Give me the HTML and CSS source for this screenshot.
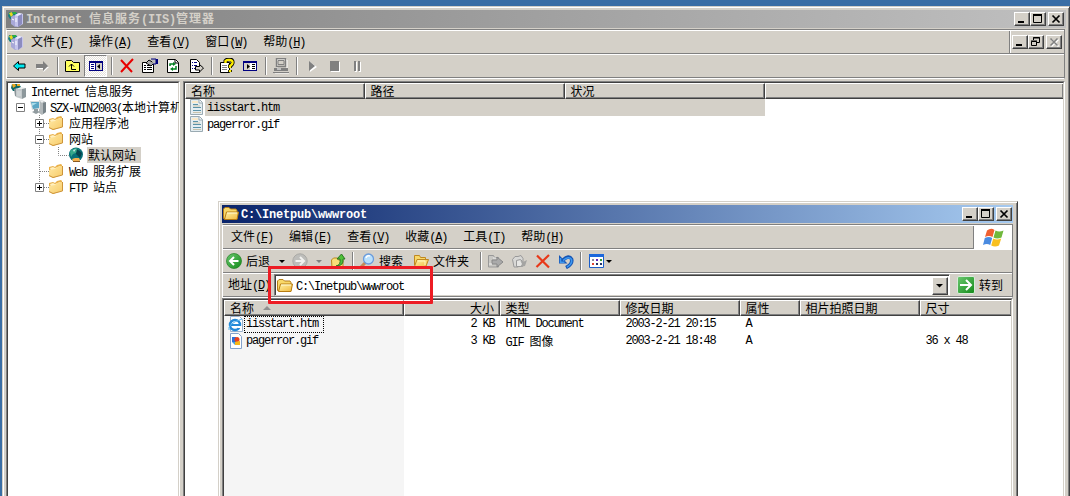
FILE: index.html
```html
<!DOCTYPE html>
<html lang="zh-CN">
<head>
<meta charset="utf-8">
<title>Internet 信息服务(IIS)管理器</title>
<link rel="stylesheet" href="styles.css">
</head>
<body>
<svg class="defs" width="0" height="0">
  <defs>
    <linearGradient id="fold" x1="0" y1="0" x2="1" y2="1"><stop offset="0" stop-color="#fff3a8"/><stop offset="1" stop-color="#f0b83c"/></linearGradient>
    <linearGradient id="tfold" x1="0" y1="0" x2="1" y2="1"><stop offset="0" stop-color="#ffe9a6"/><stop offset="1" stop-color="#f7cb68"/></linearGradient>
    <linearGradient id="grn" x1="0" y1="0" x2="1" y2="1"><stop offset="0" stop-color="#6cc870"/><stop offset="1" stop-color="#128a18"/></linearGradient>
    <symbol id="server" viewBox="0 0 16 16">
      <path d="M1 1h7l2 3-2 4H2L0 5z" fill="#168080"/><path d="M1 2l3-1 1 3-2 2z" fill="#e8d820"/><path d="M5 1h3v2H5z" fill="#28b040"/>
      <path d="M3 6l3-2 4 2v9l-3 1-4-3z" fill="#a8a8d8"/><path d="M7 4l4-2 4 1v10l-5 3-3-1z" fill="#c4c4ec"/><path d="M7 4l4-2 4 1-5 2z" fill="#ececff"/><path d="M10 5v11l4-3V3z" fill="#8c8cc0"/><path d="M4 8l2 1M8 7v4" stroke="#fff"/>
    </symbol>
    <symbol id="treeserver" viewBox="0 0 16 16">
      <path d="M1 1h7l2 3-2 4H2L0 5z" fill="#0c6868"/><path d="M1 1l3 0 1 2-3 2zM6 1h3v2H6z" fill="#eca820"/>
      <path d="M3 6l3-1v9l-2-1z" fill="#8a9498"/><path d="M5 6l6-1v11l-6-2z" fill="#c2c8ca"/><path d="M5 6l5-2 5 1-4 1z" fill="#e8ecec"/><path d="M11 6v10l4-2V5z" fill="#8d989c"/><path d="M7 8v5M9 8v5" stroke="#d8dddf"/>
    </symbol>
    <symbol id="pc" viewBox="0 0 16 16">
      <path d="M9 1l5 1 2 2v9l-4 3-3-2z" fill="#b2b8ba"/><path d="M9 1l5 1-2 2z" fill="#edf0f0"/><path d="M13 4v11l3-2V3z" fill="#798489"/>
      <path d="M0 2l10 0v8l-8 1z" fill="#d8dddd"/><path d="M1 3l8 0v6L3 10z" fill="#5ba6c4"/><path d="M2 4l5 0-5 3z" fill="#a8dcea"/><path d="M4 10h4v2l2 1-4 2-4-2 2-1z" fill="#919b9f"/>
    </symbol>
    <symbol id="treefolder" viewBox="0 0 16 16">
      <path d="M1 4l4-1 2 1 2-2 4-1 1 1v9L5 15l-4-3z" fill="#e9b04a"/><path d="M2 5l3-1 2 1 5-2 1 1v2L3 8z" fill="#fff0c0"/><path d="M1 7l6-1 2-2 5-1v9l-9 3-4-2z" fill="url(#tfold)"/><path d="M14.500 3v9L5 14.500l-4-2" fill="none" stroke="#cd943a"/>
    </symbol>
    <symbol id="globe" viewBox="0 0 16 16">
      <circle cx="8" cy="7.500" r="7" fill="#087078"/><path d="M3 3l5-2 3 2-3 3-3 1-2 3-1-5z" fill="#35a88a"/><path d="M9 2l5 4-2 5-4-4z" fill="#06424c"/><path d="M5 3l3-1-2 3z" fill="#c8e8e0"/><path d="M4 12l3-1h4l1 2-1 1H5z" fill="#f2b04e"/><path d="M5 14.500h7" stroke="#8a5a20"/>
    </symbol>
    <symbol id="folder" viewBox="0 0 16 16">
      <path d="M.5 12.500V3l1.500-1.500h4L7.500 3H13l1 1.500v8z" fill="#f8d868" stroke="#b47c18"/><path d="M1.500 13.500L3.500 6H15.500L14 13.500z" fill="url(#fold)" stroke="#b87c10"/><path d="M4 7h10" stroke="#fffbd8"/>
    </symbol>
    <symbol id="doc" viewBox="0 0 16 16">
      <path d="M1.500.5h9l3 3v12h-12z" fill="#e4edf1" stroke="#9aaab2"/><path d="M3 2h6v2H3z" fill="#fae9c8"/><path d="M10 1v3h3" fill="#fff" stroke="#98a8b0"/><path d="M4 5.500h5M4 8.500h8M4 11.500h8" stroke="#5b93a8"/><path d="M4 7h7M4 13.500h8" stroke="#c9c3ab"/>
    </symbol>
    <symbol id="menuwin" viewBox="0 0 14 10">
      <path d="M0 0h14v10H0z" fill="#000080"/><path d="M1 2h5v7H1zM7 2h6v7H7z" fill="#fff"/>
    </symbol>
  </defs>
</svg>

<div class="window iis">
  <div class="titlebar inactive">
    <svg class="i16"><use href="#server"/></svg>
    <h1><b>Internet </b>信息服务<b>(IIS)</b>管理器</h1>
    <div class="controls">
      <span class="btn"><svg viewBox="0 0 12 10"><path d="M2 8h6" stroke="#000" stroke-width="2"/></svg></span>
      <span class="btn"><svg viewBox="0 0 12 10"><path d="M1.500 0v8.500h8V0" fill="none" stroke="#000"/><path d="M1 1h9" stroke="#000" stroke-width="2"/></svg></span>
      <span class="btn close"><svg viewBox="0 0 12 10"><path d="M2.500 1.500l7 7M9.500 1.500l-7 7" stroke="#000" stroke-width="1.700"/></svg></span>
    </div>
  </div>

  <div class="bands">
    <div class="menu">
      <svg class="i16"><use href="#server"/></svg>
      <span>文件<i>(<u>F</u>)</i></span><span>操作<i>(<u>A</u>)</i></span><span>查看<i>(<u>V</u>)</i></span><span>窗口<i>(<u>W</u>)</i></span><span>帮助<i>(<u>H</u>)</i></span>
      <div class="controls child">
        <div class="btn"><svg viewBox="0 0 12 10"><path d="M2 8h6" stroke="#000" stroke-width="2"/></svg></div>
        <div class="btn"><svg viewBox="0 0 12 10"><path d="M3.500 3V.5h6v5H7M3 1h7" fill="none" stroke="#000"/><path d="M1.500 4.500h5v4h-5zM1 4h6" fill="none" stroke="#000"/></svg></div>
        <div class="btn close"><svg viewBox="0 0 12 10"><path d="M3.500 2.500l7 7M10.500 2.500l-7 7" stroke="#fff" stroke-width="1.500"/><path d="M2.500 1.500l7 7M9.500 1.500l-7 7" stroke="#808080" stroke-width="1.500"/></svg></div>
      </div>
    </div>
    <div class="tools">
      <div class="tool"><svg class="i16"><path d="M2.500 8l5-4.500V6h6.500v4H7.500v2.500z" fill="#00e8f0" stroke="#000"/></svg></div>
      <div class="tool"><svg class="i16"><path d="M15 9L9.500 14v-3H3v-2h6" fill="#fff"/><path d="M14 8L9 3v3H2v4h7v3z" fill="#808080"/></svg></div>
      <hr>
      <div class="tool"><svg class="i16"><path d="M.5 13.500v-10l1-1h5l2 2h6v9z" fill="#ffff60" stroke="#000"/><path d="M6.500 6v5.500H11M4 8.500L6.500 6 9 8.500" fill="none" stroke="#000"/></svg></div>
      <div class="tool pressed"><svg width="14" height="10"><use href="#menuwin"/><path d="M2 3.500h3M2 5.500h3M2 7.500h3" stroke="#000080"/><path d="M7 2h6v7H7z" fill="#d4d0c8"/><path d="M8 5.500L11 3v5z"/></svg></div>
      <hr>
      <div class="tool"><svg class="i16"><path d="M2 2l11 12M14 1L2 14" stroke="#e80000" stroke-width="2"/></svg></div>
      <div class="tool"><svg class="i16"><path d="M.5 4.500h11v10H.5z" fill="#fff" stroke="#000"/><path d="M2 7.500h2m1 0h5M2 9.500h2m1 0h5M2 11.500h2m1 0h5" stroke="#000"/><path d="M4 5l3-3 5 3-3 3z" fill="#a8a8a8" stroke="#000"/><path d="M9 1h5v5h-3" fill="#b8b8b8" stroke="#000080"/><path d="M14 1h2v5h-2z" fill="#000080"/></svg></div>
      <div class="tool"><svg class="i16"><path d="M2.500 1.500h8l3 3v10h-11z" fill="#fff" stroke="#000"/><path d="M10 2v3h3" fill="none" stroke="#000"/><path d="M5 8V6h4M11 8v3H7" fill="none" stroke="#008020" stroke-width="1.500"/><path d="M8 4l3 2-3 2zM8 9l-3 2 3 2z" fill="#008020"/></svg></div>
      <div class="tool"><svg class="i16"><path d="M2.500 1.500h6l3 3v10h-9z" fill="#fff" stroke="#000"/><path d="M4 4.500h1m1 0h3M4 7.500h1m1 0h3M4 10.500h1m1 0h3" stroke="#000080"/><path d="M7.500 8.500h4v-2l4 3.500-4 4v-2h-4z" fill="#d4d0c8" stroke="#000"/></svg></div>
      <hr>
      <div class="tool"><svg class="i16"><path d="M1.500 4.500h9v10h-9z" fill="#fff" stroke="#000"/><path d="M3 7.500h5M3 9.500h5M3 11.500h5" stroke="#808080"/><path d="M6.500 5V3Q8 1 11 1.500T13.500 5Q13 7 11 8v2M11 12v2" fill="none" stroke="#000" stroke-width="4"/><path d="M6.500 5V3Q8 1.500 11 2T13.500 5Q13 7 11 8v2M11 12v2" fill="none" stroke="#ffee00" stroke-width="2.400"/></svg></div>
      <div class="tool"><svg width="14" height="10"><use href="#menuwin"/><path d="M1 2h6v7H1z" fill="#d4d0c8"/><path d="M4 3l3 2.500L4 8z"/><path d="M9 3.500h3M9 5.500h3M9 7.500h3" stroke="#000"/></svg></div>
      <hr>
      <div class="tool"><svg class="i16"><path d="M4 2h10v9H4zM2 15h14" fill="none" stroke="#fff"/><path d="M3.500.5h9v8h-9z" fill="none" stroke="#808080" stroke-width="1.400"/><path d="M5 2.500h6v4H5z" fill="none" stroke="#808080"/><path d="M1 10h14v3H1zM0 14h16v1H0z" fill="#808080"/><path d="M4 11h4" stroke="#fff"/></svg></div>
      <hr>
      <div class="tool"><svg class="i16"><path d="M6 4v10l7-5" fill="#fff"/><path d="M5 3v10l6-5z" fill="#808080"/></svg></div>
      <div class="tool"><svg class="i16"><path d="M4 4h9v10H4z" fill="#fff"/><path d="M3 3h9v10H3z" fill="#808080"/></svg></div>
      <div class="tool"><svg class="i16"><path d="M5 4h2v10H5zM9 4h2v10H9z" fill="#fff"/><path d="M4 3h2v10H4zM8 3h2v10H8z" fill="#808080"/></svg></div>
    </div>
  </div>

  <div class="panes">
    <div class="tree pane">
      <svg class="lines" width="80" height="115"><g stroke="#808080" stroke-dasharray="1 1" fill="none"><path d="M24 24.500h6M30.500 32v72M35 40.500h6M35 56.500h6M49.500 64v8.500h10M31 88.500h10M35 104.500h6"/></g><g fill="#fff" stroke="#808080"><path d="M7.500 20.500h8v8h-8zM26.500 36.500h8v8h-8zM26.500 52.500h8v8h-8zM26.500 100.500h8v8h-8z"/></g><path d="M9 24.500h5M28 40.500h5M30.500 38v5M28 56.500h5M28 104.500h5M30.500 102v5" stroke="#000"/></svg>
      <div class="node"><svg class="i16"><use href="#treeserver"/></svg><span><i>Internet </i>信息服务</span></div>
      <div class="node d1"><svg class="i16"><use href="#pc"/></svg><span><i>SZX-WIN2003(</i>本地计算机</span></div>
      <div class="node d2"><svg class="i16"><use href="#treefolder"/></svg><span>应用程序池</span></div>
      <div class="node d2"><svg class="i16"><use href="#treefolder"/></svg><span>网站</span></div>
      <div class="node d3"><svg class="i16"><use href="#globe"/></svg><span class="sel">默认网站</span></div>
      <div class="node d2"><svg class="i16"><use href="#treefolder"/></svg><span><i>Web </i>服务扩展</span></div>
      <div class="node d2"><svg class="i16"><use href="#treefolder"/></svg><span><i>FTP </i>站点</span></div>
    </div>
    <div class="pane list">
      <div class="head iiscols"><span>名称</span><span>路径</span><span>状况</span><span></span></div>
      <div class="item on"><svg class="i16"><use href="#doc"/></svg><i>iisstart.htm</i></div>
      <div class="item"><svg class="i16"><use href="#doc"/></svg><i>pagerror.gif</i></div>
    </div>
  </div>
</div>

<div class="window explorer">
  <div class="titlebar active">
    <svg class="i16"><use href="#folder"/></svg>
    <h1><b>C:\Inetpub\wwwroot</b></h1>
    <div class="controls">
      <span class="btn"><svg viewBox="0 0 12 10"><path d="M2 8h6" stroke="#000" stroke-width="2"/></svg></span>
      <span class="btn"><svg viewBox="0 0 12 10"><path d="M1.500 0v8.500h8V0" fill="none" stroke="#000"/><path d="M1 1h9" stroke="#000" stroke-width="2"/></svg></span>
      <span class="btn close"><svg viewBox="0 0 12 10"><path d="M2.500 1.500l7 7M9.500 1.500l-7 7" stroke="#000" stroke-width="1.700"/></svg></span>
    </div>
  </div>
  <div class="bands">
    <div class="menu">
      <span>文件<i>(<u>F</u>)</i></span><span>编辑<i>(<u>E</u>)</i></span><span>查看<i>(<u>V</u>)</i></span><span>收藏<i>(<u>A</u>)</i></span><span>工具<i>(<u>T</u>)</i></span><span>帮助<i>(<u>H</u>)</i></span>
      <div class="flag"><svg width="22" height="20" viewBox="0 0 22 20"><path d="M4 2.500Q8-.5 11.500 2L9.500 9Q6 7 2 9z" fill="#f06030"/><path d="M12.500 2.500Q16 4.500 20.500 2.500L18.500 9.500Q14 11.500 10.500 9.500z" fill="#70b83c"/><path d="M1.800 10Q6 8 9.200 10L7.200 17Q4 15 0 17z" fill="#4a8be0"/><path d="M10.200 10.500Q14 12.500 18.200 10.500L16 17.500Q12 19.500 8.200 17.500z" fill="#f8c020"/></svg></div>
    </div>
    <div class="xtools">
      <svg class="i16"><circle cx="8" cy="8" r="7.500" fill="url(#grn)" stroke="#208020" stroke-width=".7"/><path d="M12.500 8H4.500M8 4L4 8l4 4" fill="none" stroke="#fff" stroke-width="2"/></svg>
      <span class="t back">后退</span>
      <svg class="drop" width="6" height="3"><path d="M0 0h6L3 3z"/></svg>
      <svg class="i16 fwd"><circle cx="8" cy="8" r="7.200" fill="#bdbdba" stroke="#aaa9a5"/><path d="M3.500 8h8M8 4l4 4-4 4" fill="none" stroke="#f2f2f0" stroke-width="2"/></svg>
      <svg class="drop dim" width="6" height="3"><path d="M0 0h6L3 3z" fill="#808080"/></svg>
      <svg class="i16 up"><path d="M1.500 7l2-2h4l1 2H13v7l-11 1z" fill="#f8e078" stroke="#b88820"/><path d="M6 13q5-1 4-7H7l4.500-5L15 6h-2q1 7-7 7z" fill="#4fc038" stroke="#287820"/></svg>
      <hr>
      <svg class="i16 find"><path d="M2 14l5-5" stroke="#c48a58" stroke-width="3"/><circle cx="9.500" cy="6" r="5" fill="#b9e0fc" stroke="#6b9cdc" stroke-width="1.300"/><path d="M7 5q1-3 4-2" stroke="#fff" stroke-width="1.500" fill="none"/></svg>
      <span class="t search">搜索</span>
      <svg class="i16"><path d="M1.500 12V2.500h5l1 2h5V7" fill="#f8d868" stroke="#c08820"/><path d="M1.500 13.500L4 6.500h11.500l-3 8z" fill="url(#fold)" stroke="#c08820"/><path d="M5 8h7v4" stroke="#fff8bc" fill="none"/></svg>
      <span class="t folders">文件夹</span>
      <hr>
      <svg class="i16 mv"><path d="M1.500 14V2.500h5l1 2h4V14z" fill="#c9c8c4" stroke="#999"/><path d="M5 7h5V4l6 5-6 5v-3H5z" fill="#aaa" stroke="#888"/><path d="M6 5h3M2 11h3" stroke="#eee"/></svg>
      <svg class="i16 cp"><path d="M1.500 6.500L4 3.500h3l3-1 2 3V10l-5 4H3z" fill="#d8d8d6" stroke="#999"/><path d="M5.500 7.500l4-1 2 2v5h-6z" fill="#e6e6e4" stroke="#999"/><path d="M9 7l3 2 4-2-2 6-5 1 2-3z" fill="#a4a4a2"/></svg>
      <svg class="i16 del"><path d="M2 2.500l12 12M14 2L1.500 14" stroke="#e83818" stroke-width="2.200"/></svg>
      <svg class="i16 undo"><path d="M8 14.500Q15 11 13.500 6 11 1.500 5 7" fill="none" stroke="#1655b4" stroke-width="3.600"/><path d="M1 2v8.500h8.500z" fill="#1655b4"/><path d="M9 14Q14.500 11 13.500 6.500 11 2.500 5 7.500M2.500 5v4.300h4" fill="none" stroke="#3d98f0" stroke-width="1.600"/></svg>
      <hr>
      <svg class="i16 view"><path d="M.5 1.500h14v13H.5z" fill="#fff" stroke="#1c5ec8"/><path d="M0 1h15v3H0z" fill="#1c68dc"/><path d="M3 6h2v2H3z" fill="#889"/><path d="M7 6h2v2H7z" fill="#62b"/><path d="M11 6h2v2h-2z" fill="#393"/><path d="M3 10h2v2H3z" fill="#d43"/><path d="M7 10h2v2H7zM11 10h2v2h-2z" fill="#236"/></svg>
      <svg class="drop v" width="6" height="3"><path d="M0 0h6L3 3z"/></svg>
    </div>
    <div class="address">
      <span class="t lab">地址<i>(<u>D</u>)</i></span>
      <div class="combo"><svg class="i16"><use href="#folder"/></svg><i>C:\Inetpub\wwwroot</i><div class="btn pick"><svg viewBox="0 0 12 14"><path d="M2 5h7L5.500 8.500z"/></svg></div></div>
      <svg class="go" width="18" height="18"><rect x=".5" y=".5" width="17" height="17" rx="1.500" fill="url(#grn)" stroke="#d8ead8"/><path d="M3 9h11M9 4l5 5-5 5" stroke="#fff" stroke-width="2" fill="none"/></svg>
      <span class="t">转到</span>
    </div>
  </div>
  <div class="pane files">
    <div class="head cols"><span>名称<svg width="8" height="4"><path d="M0 4h8L4 0z" fill="#909090"/></svg></span><span class="r">大小</span><span>类型</span><span>修改日期</span><span>属性</span><span>相片拍照日期</span><span>尺寸</span></div>
    <div class="rows">
      <div class="cols row"><div class="name"><svg class="i16"><path d="M2.500.5h9l3 3v12h-12z" fill="#fff" stroke="#9bb0cc"/><circle cx="7" cy="9" r="5" fill="none" stroke="#2389d8" stroke-width="2.500"/><path d="M3 9h8" stroke="#2389d8" stroke-width="2"/><path d="M10 10h3v2h-3z" fill="#fff"/><path d="M1 14Q-1 8 14 3" stroke="#54b4f0" fill="none"/></svg><i class="focus">iisstart.htm</i></div><i class="r">2 KB</i><i>HTML Document</i><i>2003-2-21 20:15</i><i>A</i><i></i><i></i></div>
      <div class="cols row"><div class="name"><svg class="i16"><path d="M2.500.5h8l3 3v12h-11z" fill="#fff" stroke="#84a2cc"/><path d="M4 4h4v5H4z" fill="#2b70dc"/><circle cx="9" cy="6.500" r="2.500" fill="#e84020"/><path d="M7 9l5-1v4H7z" fill="#f8b818"/><path d="M4 9h3v3z" fill="#48a0e0"/></svg><i>pagerror.gif</i></div><i class="r">3 KB</i><span><i>GIF </i>图像</span><i>2003-2-21 18:48</i><i>A</i><i></i><i>36 x 48</i></div>
    </div>
  </div>
  <div class="callout"></div>
</div>
</body>
</html>
```

FILE: styles.css
```css
* { box-sizing: border-box; }
body {
  margin: 0; width: 1070px; height: 496px; overflow: hidden; position: relative;
  background: #3a6ea5; padding: 6px 0 0 2px; color: #000;
  font: 12px/16px "Noto Sans CJK SC", sans-serif;
}
.defs { position: absolute; }
svg { display: block; flex: none; }
.i16 { width: 16px; height: 16px; }
i, b { font-style: normal; font-family: "Liberation Mono", monospace; font-size: 12px; letter-spacing: -1.2px; white-space: pre; }
u { text-underline-offset: 1px; }

.window {
  background: #d4d0c8; border: 1px solid; border-color: #d4d0c8 #404040 #404040 #d4d0c8;
  box-shadow: inset 1px 1px #fff, inset -1px -1px #808080;
  padding: 3px; display: flex; flex-direction: column;
}
.iis { width: 1068px; height: 510px; }
.explorer { position: absolute; left: 218px; top: 201px; width: 800px; height: 310px; }

.titlebar { height: 18px; display: flex; align-items: center; padding: 0 2px; flex: none; }
.inactive { background: linear-gradient(90deg, #808080, #c0c0c0); color: #d4d0c8; }
.active { background: linear-gradient(90deg, #0a246a, #a6caf0); color: #fff; margin-right: 1px; padding: 0 1px; }
.titlebar h1 { margin: 0 0 0 2px; font-size: 12px; line-height: 16px; font-weight: 700; letter-spacing: 1px; white-space: pre; flex: 1; }
.titlebar b { font-size: 12px; letter-spacing: -0.2px; }
.controls { display: flex; }
.btn {
  width: 16px; height: 14px; background: #d4d0c8; border: 1px solid; border-color: #fff #404040 #404040 #fff;
  box-shadow: inset -1px -1px #808080; padding: 1px;
}
.btn svg { width: 12px; height: 10px; }
.close { margin-left: 2px; }

.bands { flex: none; margin: 1px 1px 0 0; border: 1px solid; border-color: #808080 #808080 #fff #fff; }
.menu { height: 24px; display: flex; align-items: center; border-top: 1px solid #fff; border-bottom: 1px solid #808080; }
.menu > span { padding: 0 8px; white-space: nowrap; }
.iis .menu > .i16 { margin: 0 -1px 0 1px; }
.child { margin-left: auto; height: 22px; padding: 4px 2px 0 2px; border-left: 1px solid #808080; box-shadow: inset 1px 0 #fff; }
.flag { margin-left: auto; width: 39px; height: 23px; background: #fff; border-left: 1px solid #808080; padding: 2px 0 0 9px; }
hr { margin: 0; border: 0; width: 8px; height: 18px; flex: none; background: linear-gradient(90deg, transparent 4px, #808080 4px 5px, #fff 5px 6px, transparent 6px); }
.tools { height: 24px; border-top: 1px solid #fff; border-bottom: 1px solid #808080; display: flex; align-items: center; }
.tool { width: 23px; height: 22px; display: grid; place-items: center; }
.pressed { border: 1px solid; border-color: #808080 #fff #fff #808080; background: repeating-conic-gradient(#fff 0 25%, #e4e1dc 0 50%) 0 0 / 2px 2px; }

.panes { flex: 1; display: grid; grid-template-columns: 174px 1fr; gap: 3px; padding-top: 2px; margin-right: 1px; }
.pane { border: 1px solid; border-color: #808080 #fff #fff #808080; background: #fff; position: relative; min-width: 0; }
.pane::before { content: ""; position: absolute; inset: 0; border: 1px solid; border-color: #404040 #d4d0c8 #d4d0c8 #404040; pointer-events: none; }
.tree, .list, .files { padding: 1px; overflow: hidden; }
.lines { position: absolute; left: 2px; top: 1px; }
.node { height: 16px; display: flex; white-space: nowrap; margin-left: 3px; position: relative; }
.node span { margin-left: 3px; padding: 0 1px; }
.node.d1 { margin-left: 22px; }
.node.d2 { margin-left: 40px; }
.node.d2 span { margin-left: 4px; }
.node.d3 { margin-left: 60px; }
.node .sel { background: #d4d0c8; width: 54px; }

.head { height: 16px; display: grid; background: #d4d0c8; line-height: 14px; }
.head > span {
  border: 1px solid; border-color: #fff #404040 #404040 #fff; box-shadow: inset -1px -1px #808080;
  padding: 0 5px 0 4.5px; height: 16px; white-space: nowrap;
}
.head > span:first-child { padding-left: 5px; }
.head > span:last-child { border-right: 0; }
.iiscols { grid-template-columns: 180px 200px 200px 1fr; }
.item { height: 17px; width: 580px; display: flex; padding-left: 4px; }
.item i { padding: 1px 0 0 2px; flex: 1; }
.on i { background: #d4d0c8; }

.xtools { height: 24px; display: flex; align-items: center; border-top: 1px solid #fff; border-bottom: 1px solid #808080; padding-left: 3px; }
.t { white-space: nowrap; }
.back { margin-left: 4px; width: 24px; }
.drop { margin-left: 9px; }
.fwd { margin-left: 7px; }
.dim { margin-left: 8px; }
.up { margin-left: 8px; }
.up + hr { margin-left: 2px; }
.find { margin-left: 3px; }
.search { margin-left: 4px; width: 34px; }
.folders { margin-left: 4px; }
.folders + hr { margin-left: 7px; }
.mv { margin-left: 3px; }
.cp, .del { margin-left: 8px; }
.undo { margin-left: 7px; }
.undo + hr { margin-left: 2px; }
.view { margin-left: 5px; }
.drop.v { margin-left: 1px; }

.address { height: 24px; border-top: 1px solid #fff; border-bottom: 1px solid #808080; display: flex; align-items: center; padding-left: 5px; }
.lab { width: 46px; }
.combo {
  width: 676px; height: 22px; background: #fff; border: 1px solid #808080; border-bottom-color: #d4d0c8; border-right-color: #fff;
  box-shadow: inset 1px 1px #404040; display: flex; align-items: center; padding: 1px 1px 0 2px;
}
.combo i { flex: 1; margin-left: 3px; padding-top: 2px; }
.pick { height: 18px; }
.pick svg { height: 14px; }
.go { margin: 0 4px 0 7px; }

.files { flex: 1; margin-right: 1px; }
.cols { display: grid; grid-template-columns: 180px 96px 120px 120px 60px 120px 1fr; }
.head svg { display: inline-block; margin: 0 0 3px 9px; }
.r { text-align: right; }
.rows { height: 190px; background: linear-gradient(90deg, #f5f5f5 180px, #fff 180px); }
.row { height: 17px; line-height: 17px; }
.row > i, .row > span { padding: 0 5.5px; white-space: nowrap; height: 17px; }
.row > span { line-height: 15px; }
.name { display: flex; padding-left: 4px; }
.name i { padding: 0 2px; height: 17px; }
.focus { outline: 1px dotted #000; outline-offset: -1px; width: 80px; }
.callout { position: absolute; left: 49px; top: 64px; width: 165px; height: 38px; border: 3px solid #ed1c24; border-radius: 1px; }
```
